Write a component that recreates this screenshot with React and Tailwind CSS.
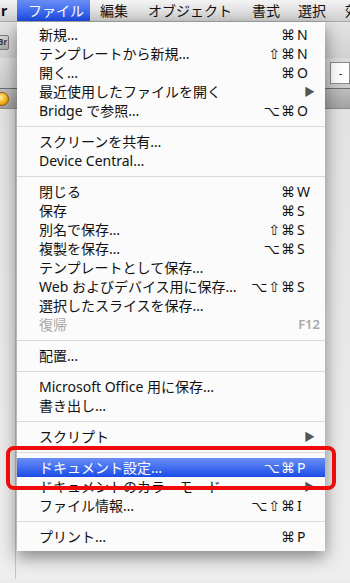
const items = [
  { label: '新規…', mods: '⌘', key: 'N' },
  { label: 'テンプレートから新規…', mods: '⇧⌘', key: 'N' },
  { label: '開く…', mods: '⌘', key: 'O' },
  { label: '最近使用したファイルを開く', sub: true },
  { label: 'Bridge で参照…', mods: '⌥⌘', key: 'O' },
  { sep: true },
  { label: 'スクリーンを共有…' },
  { label: 'Device Central…' },
  { sep: true },
  { label: '閉じる', mods: '⌘', key: 'W' },
  { label: '保存', mods: '⌘', key: 'S' },
  { label: '別名で保存…', mods: '⇧⌘', key: 'S' },
  { label: '複製を保存…', mods: '⌥⌘', key: 'S' },
  { label: 'テンプレートとして保存…' },
  { label: 'Web およびデバイス用に保存…', mods: '⌥⇧⌘', key: 'S' },
  { label: '選択したスライスを保存…' },
  { label: '復帰', disabled: true, fkey: 'F12' },
  { sep: true },
  { label: '配置…' },
  { sep: true },
  { label: 'Microsoft Office 用に保存…' },
  { label: '書き出し…' },
  { sep: true },
  { label: 'スクリプト', sub: true },
  { sep: true },
  { label: 'ドキュメント設定…', mods: '⌥⌘', key: 'P', active: true },
  { label: 'ドキュメントのカラーモード', sub: true },
  { label: 'ファイル情報…', mods: '⌥⇧⌘', key: 'I' },
  { sep: true },
  { label: 'プリント…', mods: '⌘', key: 'P' },
];

const symFont = "font-['DejaVu_Sans','Noto_Sans_CJK_JP',sans-serif]";

function MenuRow({ item }) {
  if (item.sep) {
    return (
      <div className="h-[12px] flex items-center">
        <div className="h-px w-full bg-[#dadada]" />
      </div>
    );
  }
  const color = item.active
    ? 'text-white bg-gradient-to-b from-[#6a8cf6] to-[#1a4be6]'
    : item.disabled
    ? 'text-[#a8a8a8]'
    : 'text-[#111]';
  return (
    <div className={`h-[19px] flex items-center pl-[22px] pr-[10px] ${color}`}>
      <span className="flex-1 whitespace-nowrap">{item.label}</span>
      {item.key && (
        <>
          <span className={`text-right whitespace-nowrap text-[14px] tracking-[1px] ${symFont}`}>{item.mods}</span>
          <span className="w-[19px] pl-px">{item.key}</span>
        </>
      )}
      {item.sub && (
        <span className={`text-[11px] ${item.active ? 'text-white' : 'text-[#555]'}`}>▶</span>
      )}
      {item.fkey && <span className="mr-[-5px] text-[13px] font-semibold">{item.fkey}</span>}
    </div>
  );
}

export default function App() {
  return (
    <div className="relative w-[350px] h-[583px] overflow-hidden bg-[#ececec] font-['Noto_Sans','Noto_Sans_CJK_JP',sans-serif] text-[14px] leading-none">
      {/* menubar */}
      <div className="h-[22px] flex items-center overflow-hidden whitespace-nowrap bg-gradient-to-b from-[#f4f4f4] to-[#cfcfcf] border-b border-[#a8a8a8] text-[#111]">
        <span className="shrink-0 w-[17px] pl-px font-bold">r</span>
        <span className="shrink-0 h-full flex items-center px-[11px] w-[73px] text-white bg-gradient-to-b from-[#6a8cf6] to-[#1a4be6]">ファイル</span>
        <span className="shrink-0 ml-[10px]">編集</span>
        <span className="shrink-0 ml-[20px]">オブジェクト</span>
        <span className="shrink-0 ml-[20px]">書式</span>
        <span className="shrink-0 ml-[18px]">選択</span>
        <span className="shrink-0 ml-[19px]">効果</span>
      </div>

      {/* window toolbars behind the menu */}
      <div className="h-[36px] bg-gradient-to-b from-[#e4e4e4] to-[#d0d0d0] flex items-center">
        <div className="ml-[-8px] w-[17px] h-[15px] mt-[4px] bg-gradient-to-b from-[#d8d8d8] to-[#a8a8a8] border border-[#777] rounded-[2px] text-[8px] font-bold text-[#333] flex items-center justify-end pr-px">
          Br
        </div>
      </div>
      <div className="h-[30px] bg-gradient-to-b from-[#dcdcdc] to-[#cacaca] flex items-center justify-end">
        <div className="w-[20px] h-[22px] bg-white border border-[#8a8a8a] text-[10px] pl-[8px] flex items-center">-</div>
      </div>
      <div className="h-px bg-[#6e6e6e]" />
      <div className="h-[20px] bg-gradient-to-b from-[#bdbdbd] to-[#a2a2a2] flex items-center border-b border-[#8c8c8c]">
        <div className="ml-[-5px] w-[14px] h-[14px] rounded-full border border-[#a05a00] bg-[radial-gradient(circle_at_40%_35%,#fff2a0,#f7b21c_55%,#d9700a)]" />
      </div>
      <div className="h-[470px] bg-gradient-to-b from-[#e2e2e2] to-[#eeeeee] flex">
        <div className="w-[16px] border-r border-[#c4c4c4]" />
      </div>

      {/* dropdown menu */}
      <div className="absolute left-[17px] top-[22px] w-[308px] pt-[3px] pb-[5px] bg-[#fbfbfb] shadow-[0_6px_16px_rgba(0,0,0,0.45)]">
        {items.map((item, i) => (
          <MenuRow key={i} item={item} />
        ))}
      </div>

      {/* annotation */}
      <div className="absolute left-[6px] top-[446px] w-[330px] h-[44px] border-[4px] border-[#f00a0a] rounded-[8px]" />
    </div>
  );
}
